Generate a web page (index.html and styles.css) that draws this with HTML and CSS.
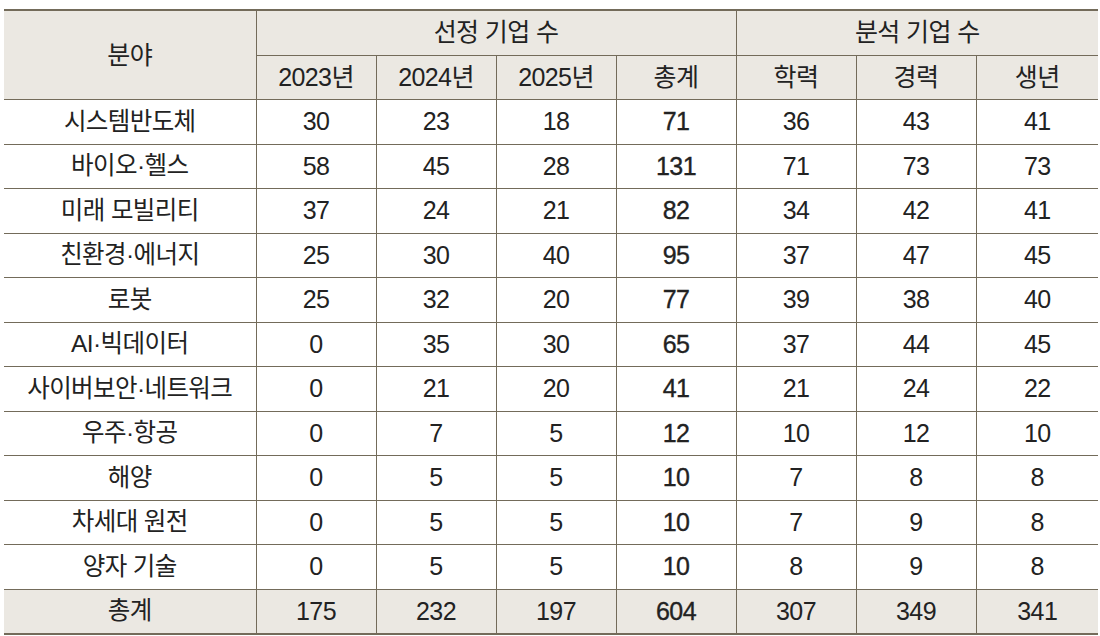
FILE: index.html
```html
<!DOCTYPE html>
<html lang="ko">
<head>
<meta charset="utf-8">
<link rel="stylesheet" href="styles.css">
</head>
<body>
<table class="stats">
  <colgroup>
    <col class="c-field"><col class="c-num"><col class="c-num"><col class="c-num"><col class="c-num"><col class="c-num"><col class="c-num"><col class="c-last">
  </colgroup>
  <thead>
    <tr>
      <th rowspan="2">분야</th>
      <th colspan="4">선정 기업 수</th>
      <th colspan="3">분석 기업 수</th>
    </tr>
    <tr>
      <th>2023년</th><th>2024년</th><th>2025년</th><th>총계</th><th>학력</th><th>경력</th><th>생년</th>
    </tr>
  </thead>
  <tbody>
    <tr><td class="name">시스템반도체</td><td>30</td><td>23</td><td>18</td><td class="sum">71</td><td>36</td><td>43</td><td>41</td></tr>
    <tr><td class="name">바이오·헬스</td><td>58</td><td>45</td><td>28</td><td class="sum">131</td><td>71</td><td>73</td><td>73</td></tr>
    <tr><td class="name">미래 모빌리티</td><td>37</td><td>24</td><td>21</td><td class="sum">82</td><td>34</td><td>42</td><td>41</td></tr>
    <tr><td class="name">친환경·에너지</td><td>25</td><td>30</td><td>40</td><td class="sum">95</td><td>37</td><td>47</td><td>45</td></tr>
    <tr><td class="name">로봇</td><td>25</td><td>32</td><td>20</td><td class="sum">77</td><td>39</td><td>38</td><td>40</td></tr>
    <tr><td class="name">AI·빅데이터</td><td>0</td><td>35</td><td>30</td><td class="sum">65</td><td>37</td><td>44</td><td>45</td></tr>
    <tr><td class="name">사이버보안·네트워크</td><td>0</td><td>21</td><td>20</td><td class="sum">41</td><td>21</td><td>24</td><td>22</td></tr>
    <tr><td class="name">우주·항공</td><td>0</td><td>7</td><td>5</td><td class="sum">12</td><td>10</td><td>12</td><td>10</td></tr>
    <tr><td class="name">해양</td><td>0</td><td>5</td><td>5</td><td class="sum">10</td><td>7</td><td>8</td><td>8</td></tr>
    <tr><td class="name">차세대 원전</td><td>0</td><td>5</td><td>5</td><td class="sum">10</td><td>7</td><td>9</td><td>8</td></tr>
    <tr><td class="name">양자 기술</td><td>0</td><td>5</td><td>5</td><td class="sum">10</td><td>8</td><td>9</td><td>8</td></tr>
  </tbody>
  <tfoot>
    <tr><td class="name">총계</td><td>175</td><td>232</td><td>197</td><td class="sum">604</td><td>307</td><td>349</td><td>341</td></tr>
  </tfoot>
</table>
</body>
</html>
```

FILE: styles.css
```css
html, body {
  margin: 0;
  padding: 0;
  background: #ffffff;
}

.stats {
  margin: 9px 0 0 4px;
  width: 1094px;
  table-layout: fixed;
  border-collapse: collapse;
  font-family: "Liberation Sans", "Noto Sans CJK KR", Arial, sans-serif;
  font-size: 25px;
  color: #222222;
  border-top: 2px solid #736b5a;
  border-bottom: 2px solid #736b5a;
}

.c-field { width: 252px; }
.c-num { width: 120px; }
.c-last { width: 122px; }

.stats th,
.stats td {
  height: 43.5px;
  padding: 0;
  text-align: center;
  vertical-align: middle;
  border: 1px solid #736b5a;
  font-weight: normal;
  letter-spacing: -0.6px;
  line-height: 1;
}

.stats th:first-child,
.stats td:first-child {
  border-left: none;
}

.stats tr > :last-child {
  border-right: none;
}

.stats thead th {
  background: #ebe8e2;
}

.stats thead tr:first-child th:last-child {
  border-right: none;
}

.stats tfoot td {
  background: #ebe8e2;
  border-top: 1px solid #736b5a;
}

.stats .name {
  font-size: 24.5px;
  letter-spacing: -0.6px;
}

.stats .sum {
  font-weight: normal;
  -webkit-text-stroke: 0.35px #222222;
}
```
